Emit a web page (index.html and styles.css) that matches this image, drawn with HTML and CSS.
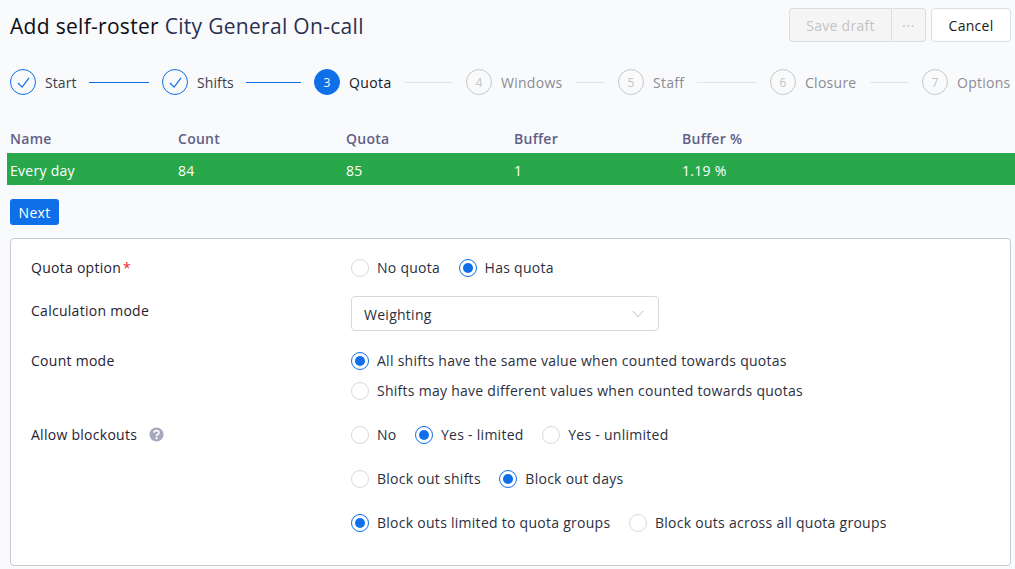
FILE: index.html
```html
<!DOCTYPE html>
<html lang="en">
<head>
<meta charset="utf-8">
<title>Add self-roster</title>
<link rel="stylesheet" href="styles.css">
</head>
<body>
<header class="top">
  <h1 class="title"><span class="title-main">Add self-roster</span> <span class="title-name">City General On-call</span></h1>
  <div class="actions">
    <div class="split">
      <button class="btn btn-disabled btn-save" type="button">Save draft</button>
      <button class="btn btn-disabled btn-more" type="button">···</button>
    </div>
    <button class="btn btn-cancel" type="button">Cancel</button>
  </div>
</header>
<nav class="steps">
  <div class="step done"><span class="dot"><svg class="check" viewBox="0 0 14 14"><path d="M1 7.5 L5.5 12 L13 2"/></svg></span><span class="step-label">Start</span><span class="line"></span></div>
  <div class="step done"><span class="dot"><svg class="check" viewBox="0 0 14 14"><path d="M1 7.5 L5.5 12 L13 2"/></svg></span><span class="step-label">Shifts</span><span class="line"></span></div>
  <div class="step current"><span class="dot">3</span><span class="step-label">Quota</span><span class="line"></span></div>
  <div class="step"><span class="dot">4</span><span class="step-label">Windows</span><span class="line"></span></div>
  <div class="step"><span class="dot">5</span><span class="step-label">Staff</span><span class="line"></span></div>
  <div class="step"><span class="dot">6</span><span class="step-label">Closure</span><span class="line"></span></div>
  <div class="step last"><span class="dot">7</span><span class="step-label">Options</span></div>
</nav>
<section class="table">
  <div class="row head"><span>Name</span><span>Count</span><span>Quota</span><span>Buffer</span><span>Buffer %</span></div>
  <div class="row body"><span>Every day</span><span>84</span><span>85</span><span>1</span><span>1.19 %</span></div>
</section>
<button class="next" type="button">Next</button>
<section class="panel">
  <div class="field f-quota">
    <div class="label">Quota option<span class="req">*</span></div>
    <div class="control">
      <div class="radios">
        <label class="radio"><i class="rd"></i>No quota</label>
        <label class="radio"><i class="rd on"></i>Has quota</label>
      </div>
    </div>
  </div>
  <div class="field f-calc">
    <div class="label">Calculation mode</div>
    <div class="control">
      <div class="select"><span>Weighting</span><svg class="chev" viewBox="0 0 12 8"><path d="M1 1 L6 7 L11 1"/></svg></div>
    </div>
  </div>
  <div class="field f-count">
    <div class="label">Count mode</div>
    <div class="control stack-tight">
      <div class="radios"><label class="radio"><i class="rd on"></i>All shifts have the same value when counted towards quotas</label></div>
      <div class="radios"><label class="radio"><i class="rd"></i>Shifts may have different values when counted towards quotas</label></div>
    </div>
  </div>
  <div class="field f-block">
    <div class="label">Allow blockouts<svg class="help" viewBox="0 0 16 16"><circle cx="8" cy="8" r="7.5"/><path d="M5.4 6.2 C5.4 3.1 10.7 3.1 10.7 6 C10.7 7.8 8 7.6 8 9.8"/><rect x="6.9" y="10.8" width="2.2" height="2.2" rx=".4"/></svg></div>
    <div class="control stack-wide">
      <div class="radios">
        <label class="radio"><i class="rd"></i>No</label>
        <label class="radio"><i class="rd on"></i>Yes - limited</label>
        <label class="radio"><i class="rd"></i>Yes - unlimited</label>
      </div>
      <div class="radios">
        <label class="radio"><i class="rd"></i>Block out shifts</label>
        <label class="radio"><i class="rd on"></i>Block out days</label>
      </div>
      <div class="radios">
        <label class="radio"><i class="rd on"></i>Block outs limited to quota groups</label>
        <label class="radio"><i class="rd"></i>Block outs across all quota groups</label>
      </div>
    </div>
  </div>
</section>
</body>
</html>
```
FILE: styles.css
```css
* { box-sizing: border-box; }
html, body { margin: 0; padding: 0; }
body {
  width: 1015px;
  height: 569px;
  overflow: hidden;
  background: #f9fafc;
  color: #1f2233;
  font-family: "Open Sans", "Noto Sans", sans-serif;
  font-size: 14px;
  letter-spacing: 0.27px;
}
.top {
  display: flex;
  justify-content: space-between;
  align-items: flex-start;
  padding: 8px 4px 0 10px;
  height: 69px;
}
.title {
  margin: 0;
  font-size: 21px;
  font-weight: 500;
  line-height: 36px;
  letter-spacing: 0.3px;
  color: #0c0e16;
}
.title-name { color: #2a3052; }
.actions { display: flex; gap: 5px; }
.split { display: flex; }
.btn {
  height: 34px;
  font: inherit;
  font-size: 14px;
  letter-spacing: inherit;
  border: 1px solid #dcdde1;
  border-radius: 4px;
  padding: 0;
}
.btn-disabled { background: #f5f5f5; color: #c4c4c4; }
.btn-save { width: 102px; border-radius: 4px 0 0 4px; border-right: 0; }
.btn-more { width: 35px; border-radius: 0 4px 4px 0; letter-spacing: 0.6px; }
.btn-cancel { width: 80px; background: #fff; color: #1a1a1a; }
.steps {
  display: grid;
  grid-template-columns: repeat(6, 152px) auto;
  padding-left: 10px;
  height: 26px;
}
.step { display: flex; align-items: center; color: #8a8c96; }
.dot {
  flex: none;
  width: 26px;
  height: 26px;
  border-radius: 50%;
  border: 1px solid #c9c9c9;
  display: flex;
  align-items: center;
  justify-content: center;
  font-size: 12px;
  color: #c4c4c4;
  margin-right: 9px;
}
.step-label { white-space: nowrap; }
.line { flex: 1; height: 1px; background: #e4e4e7; margin: 0 13px; }
.step.done .dot { border-color: #0e6fe8; }
.step.done .step-label { color: #3a3d4d; letter-spacing: 0.1px; }
.step.done .line { background: #0e6fe8; margin-left: 12.5px; }
.step.current .dot { background: #0e6fe8; border-color: #0e6fe8; color: #fff; }
.step.current .step-label { color: #14161f; font-weight: 500; letter-spacing: 0.4px; }
.check { width: 13px; height: 13px; fill: none; stroke: #0e6fe8; stroke-width: 1.3; }
.table { margin-top: 30px; margin-left: 7px; }
.row {
  display: grid;
  grid-template-columns: repeat(4, 168px) 1fr;
  padding-left: 3px;
  align-items: center;
}
.head { height: 28px; padding-bottom: 2px; color: #5f6086; font-weight: 600; }
.body { height: 32px; padding-top: 2px; background: #28a84a; color: #fff; }
.next {
  display: block;
  margin: 14px 0 0 10px;
  width: 49px;
  height: 26px;
  border: 0;
  border-radius: 3px;
  background: #0e6fe8;
  color: #fff;
  font: inherit;
  font-size: 14px;
  letter-spacing: inherit;
  padding: 0;
}
.panel {
  margin: 13px 4px 0 10px;
  height: 328px;
  background: #fff;
  border: 1px solid #c9cad1;
  border-radius: 4px;
  padding: 0 20px;
}
.field { display: grid; grid-template-columns: 320px 1fr; }
.label { line-height: 20px; color: #1f2233; }
.req { color: #f5222d; margin-left: 2px; }
.radios { display: flex; gap: 18.5px; height: 20px; align-items: flex-start; }
.radio { display: flex; align-items: flex-start; line-height: 20px; white-space: nowrap; color: #2c2f40; }
.rd {
  flex: none;
  width: 18px;
  height: 18px;
  margin: 1px 8px 0 0;
  border-radius: 50%;
  border: 1px solid #d9d9d9;
  background: #fff;
  position: relative;
}
.rd.on { border-color: #0e6fe8; }
.rd.on::after {
  content: "";
  position: absolute;
  inset: 3px;
  border-radius: 50%;
  background: #0e6fe8;
}
.f-quota { margin-top: 19px; }
.f-calc { margin-top: 18px; }
.f-calc .label { margin-top: 5px; }
.select {
  width: 308px;
  height: 35px;
  border: 1px solid #d9d9d9;
  border-radius: 4px;
  padding: 1px 12px 0;
  display: flex;
  align-items: center;
  justify-content: space-between;
  color: #2c2f40;
}
.chev { width: 12px; height: 8px; fill: none; stroke: #bfbfbf; stroke-width: 1; margin-right: 2px; }
.f-count { margin-top: 20px; }
.stack-tight { display: flex; flex-direction: column; gap: 10px; }
.f-block { margin-top: 24px; }
.stack-wide { display: flex; flex-direction: column; gap: 24px; }
.help { width: 15px; height: 15px; margin-left: 12px; vertical-align: -2px; }
.help circle { fill: #a6a8bf; }
.help path { fill: none; stroke: #fff; stroke-width: 1.8; }
.help rect { fill: #fff; }
```
